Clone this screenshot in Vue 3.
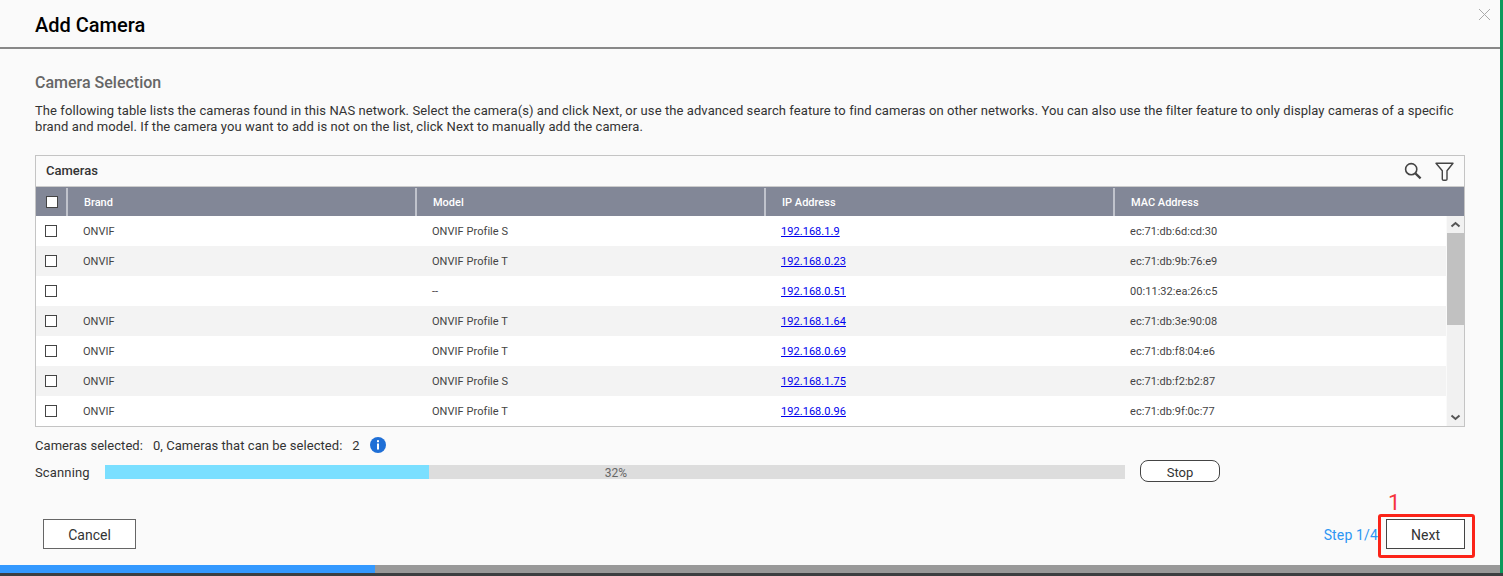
<script setup>
const rows = [
  { brand: 'ONVIF', model: 'ONVIF Profile S', ip: '192.168.1.9', mac: 'ec:71:db:6d:cd:30' },
  { brand: 'ONVIF', model: 'ONVIF Profile T', ip: '192.168.0.23', mac: 'ec:71:db:9b:76:e9' },
  { brand: '', model: '--', ip: '192.168.0.51', mac: '00:11:32:ea:26:c5' },
  { brand: 'ONVIF', model: 'ONVIF Profile T', ip: '192.168.1.64', mac: 'ec:71:db:3e:90:08' },
  { brand: 'ONVIF', model: 'ONVIF Profile T', ip: '192.168.0.69', mac: 'ec:71:db:f8:04:e6' },
  { brand: 'ONVIF', model: 'ONVIF Profile S', ip: '192.168.1.75', mac: 'ec:71:db:f2:b2:87' },
  { brand: 'ONVIF', model: 'ONVIF Profile T', ip: '192.168.0.96', mac: 'ec:71:db:9f:0c:77' }
]
</script>

<template>
  <div class="screen">
    <div class="dialog">
      <header class="head">
        <h1>Add Camera</h1>
        <svg class="close" width="13" height="13" viewBox="0 0 13 13"><path d="M1 1l11 11M12 1L1 12" stroke="#aaa" stroke-width="1" fill="none" /></svg>
      </header>
      <main class="body">
        <h2>Camera Selection</h2>
        <p class="desc">The following table lists the cameras found in this NAS network. Select the camera(s) and click Next, or use the advanced search feature to find cameras on other networks. You can also use the filter feature to only display cameras of a specific brand and model. If the camera you want to add is not on the list, click Next to manually add the camera.</p>
        <section class="panel">
          <div class="toolbar">
            <span class="tb-title">Cameras</span>
            <div class="tools">
              <svg width="18" height="18" viewBox="0 0 18 18"><circle cx="7.2" cy="7.2" r="5.6" fill="none" stroke="#444" stroke-width="1.6" /><path d="M11.4 11.4l5.2 5" stroke="#444" stroke-width="2.2" fill="none" /></svg>
              <svg width="19" height="19" viewBox="0 0 19 19"><path d="M1 1.2h17l-6 7.6v8.4q0 1-1.4 1h-2q-1.3 0-1.3-1V8.8z" fill="none" stroke="#444" stroke-width="1.4" stroke-linejoin="round" /></svg>
            </div>
          </div>
          <div class="thead">
            <div class="c-check"><span class="box white"></span></div>
            <div class="th">Brand</div>
            <div class="th">Model</div>
            <div class="th">IP Address</div>
            <div class="th last">MAC Address</div>
          </div>
          <div class="tbody">
            <div class="rows">
              <div v-for="r in rows" :key="r.ip" class="row">
                <div class="c-check"><span class="box"></span></div>
                <div class="td">{{ r.brand }}</div>
                <div class="td">{{ r.model }}</div>
                <div class="td"><a href="#">{{ r.ip }}</a></div>
                <div class="td last">{{ r.mac }}</div>
              </div>
            </div>
            <div class="scrollbar">
              <div class="arrow"><svg width="11" height="7" viewBox="0 0 11 7"><path d="M1.5 5.5l4-3.5 4 3.5" fill="none" stroke="#555" stroke-width="2" /></svg></div>
              <div class="track"><div class="thumb"></div></div>
              <div class="arrow"><svg width="11" height="7" viewBox="0 0 11 7"><path d="M1.5 1.5l4 3.5 4-3.5" fill="none" stroke="#555" stroke-width="2" /></svg></div>
            </div>
          </div>
        </section>
        <div class="count">
          <span>Cameras selected:</span><span class="n1">0, Cameras that can be selected:</span><span class="n2">2</span>
          <svg class="info" width="16" height="16" viewBox="0 0 16 16"><circle cx="8" cy="8" r="8" fill="#1f6fd6" /><rect x="7" y="3.2" width="2" height="2" fill="#fff" /><rect x="7" y="6.5" width="2" height="6" fill="#fff" /></svg>
        </div>
        <div class="scan">
          <span class="scan-label">Scanning</span>
          <div class="bar"><div class="fill" :style="{ width: '324px' }"></div><span class="pct">32%</span></div>
          <button class="stop">Stop</button>
        </div>
      </main>
      <footer class="foot">
        <button class="btn">Cancel</button>
        <div class="right">
          <span class="step">Step 1/4</span>
          <button class="btn next">Next</button>
        </div>
        <div class="mark"></div>
        <span class="mark-num">1</span>
      </footer>
      <div class="progress"><div class="done"></div></div>
    </div>
    <div class="under"></div>
  </div>
</template>

<style scoped>
.screen { position: relative; width: 1503px; height: 576px; background: #0b9a5b; overflow: hidden; font-family: Roboto, "Liberation Sans", sans-serif; color: #333; }
.dialog { width: 1500px; height: 573px; background: #fafafa; display: flex; flex-direction: column; }
.under { height: 3px; width: 1503px; background: #3c3f41; }
.head { position: relative; height: 47px; border-bottom: 2px solid #888; box-sizing: content-box; display: flex; align-items: center; padding-left: 35px; }
h1 { margin: 2px 0 0; font-size: 20px; font-weight: 500; color: #000; line-height: 24px; }
.close { position: absolute; right: 9px; top: 8px; }
.body { flex: 1; padding: 0 35px; display: flex; flex-direction: column; min-height: 0; }
h2 { margin: 24px 0 0; font-size: 16px; font-weight: 500; color: #666; line-height: 20px; }
.desc { margin: 10px 0 0; font-size: 13px; line-height: 16px; color: #333; width: 1430px; letter-spacing: 0.08px; }
.panel { margin-top: 20px; width: 1430px; height: 272px; box-sizing: border-box; border: 1px solid #c4c4c4; display: flex; flex-direction: column; }
.toolbar { height: 30px; display: flex; justify-content: space-between; align-items: center; padding: 0 10px; font-size: 13px; font-weight: 500; color: #333; border-bottom: 1px solid #ccc; box-sizing: content-box; }
.tb-title { margin-bottom: 2px; }
.tools { display: flex; gap: 13px; align-items: center; }
.thead { height: 29px; background: #828797; display: flex; color: #fff; font-size: 11px; font-weight: 500; padding-top: 1px; box-sizing: border-box; }
.c-check { width: 30px; flex: none; display: flex; align-items: center; padding-left: 9px; box-sizing: border-box; }
.th { width: 349px; flex: none; border-left: 2px solid #c0c3cc; padding-left: 16px; box-sizing: border-box; display: flex; align-items: center; }
.th.last { flex: 1; width: auto; }
.tbody { flex: 1; display: flex; min-height: 0; }
.rows { flex: 1; min-width: 0; }
.row { height: 30px; display: flex; background: #fff; font-size: 11px; color: #444; letter-spacing: 0.05px; }
.row:nth-child(even) { background: #f3f3f3; }
.td { width: 349px; flex: none; padding-left: 17px; box-sizing: border-box; display: flex; align-items: center; }
.td.last { flex: 1; width: auto; }
a { color: #0000ee; text-decoration: underline; }
.box { width: 10px; height: 10px; border: 1px solid #444; background: #fff; display: block; }
.box.white { margin-left: 1px; }
.scrollbar { width: 17px; flex: none; background: #f1f1f1; display: flex; flex-direction: column; margin-left: 1px; }
.arrow { height: 17px; display: flex; align-items: center; justify-content: center; }
.track { flex: 1; }
.thumb { height: 92px; background: #c1c1c1; }
.count { display: flex; align-items: center; margin-top: 10px; height: 16px; font-size: 13px; color: #333; letter-spacing: 0.05px; }
.n1 { margin-left: 10px; }
.n2 { margin-left: 10px; }
.info { margin-left: 10px; }
.scan { display: flex; align-items: flex-start; margin-top: 7px; height: 22px; font-size: 13px; }
.scan-label { width: 70px; flex: none; line-height: 16px; margin-top: 5px; letter-spacing: 0.15px; }
.bar { position: relative; width: 1020px; height: 14px; background: #ddd; margin-top: 5px; }
.fill { height: 100%; background: #7adfff; }
.pct { position: absolute; left: 2px; right: 0; top: 1px; text-align: center; font-size: 12px; line-height: 14px; color: #666; }
.stop { width: 80px; height: 22px; margin-left: 15px; border: 1px solid #444; border-radius: 8px; background: #fff; font: 13px Roboto, sans-serif; color: #333; padding: 3px 0 0; }
.foot { position: relative; height: 46px; padding: 0 35px 0 43px; display: flex; justify-content: space-between; align-items: flex-start; }
.btn { width: 93px; height: 30px; box-sizing: border-box; border: 1px solid #666; background: #fff; font: 14px Roboto, sans-serif; color: #333; padding: 2px 0 0; }
.right { display: flex; align-items: center; gap: 8px; }
.step { font-size: 14px; color: #2d96f3; margin-top: 2px; letter-spacing: 0.15px; }
.next { width: 79px; border-color: #444; }
.mark { position: absolute; left: 1378px; top: -5px; width: 97px; height: 44px; box-sizing: border-box; border: 3px solid #fb2318; border-radius: 3px; pointer-events: none; }
.mark-num { position: absolute; left: 1388px; top: -28px; font-size: 22px; line-height: 24px; color: #f5333c; }
.progress { height: 8px; background: #999; }
.done { width: 375px; height: 100%; background: #3399ff; }
</style>

<style>
html, body { margin: 0; }
</style>
